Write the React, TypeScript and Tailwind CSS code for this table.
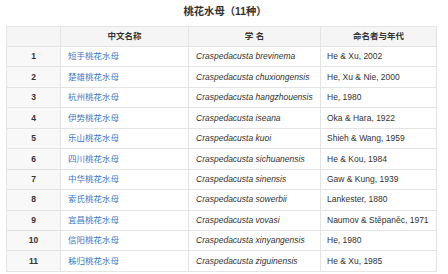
const species = [
  { cn: "短手桃花水母", sp: "brevinema", author: "He & Xu, 2002" },
  { cn: "楚雄桃花水母", sp: "chuxiongensis", author: "He, Xu & Nie, 2000" },
  { cn: "杭州桃花水母", sp: "hangzhouensis", author: "He, 1980" },
  { cn: "伊势桃花水母", sp: "iseana", author: "Oka & Hara, 1922" },
  { cn: "乐山桃花水母", sp: "kuoi", author: "Shieh & Wang, 1959" },
  { cn: "四川桃花水母", sp: "sichuanensis", author: "He & Kou, 1984" },
  { cn: "中华桃花水母", sp: "sinensis", author: "Gaw & Kung, 1939" },
  { cn: "索氏桃花水母", sp: "sowerbii", author: "Lankester, 1880" },
  { cn: "宜昌桃花水母", sp: "vovasi", author: "Naumov & Stěpaněc, 1971" },
  { cn: "信阳桃花水母", sp: "xinyangensis", author: "He, 1980" },
  { cn: "秭归桃花水母", sp: "ziguinensis", author: "He & Xu, 1985" },
];

export default function App() {
  return (
    <div
      className="w-[448px] h-[274px] bg-white text-[#333] overflow-hidden"
      style={{ fontFamily: '"Liberation Sans", "Noto Sans CJK SC", sans-serif' }}
    >
      <div className="h-[26px] flex items-center justify-center pl-[2px] pb-[2px] text-[10.3px] font-bold">
        桃花水母（11种）
      </div>
      <div className="pl-[6px]">
        <table className="w-[430px] border-collapse table-fixed text-[8.5px] border border-[#e4e4e4]">
          <colgroup>
            <col className="w-[54px]" />
            <col className="w-[128px]" />
            <col className="w-[132px]" />
            <col className="w-[116px]" />
          </colgroup>
          <thead>
            <tr className="h-[20px] bg-[#f5f5f5] font-bold">
              <th className="border border-[#e4e4e4]"></th>
              <th className="border border-[#e4e4e4] text-center">中文名称</th>
              <th className="border border-[#e4e4e4] text-center">学 名</th>
              <th className="border border-[#e4e4e4] text-center">命名者与年代</th>
            </tr>
          </thead>
          <tbody>
            {species.map((s, i) => (
              <tr key={s.sp} className="h-[20.45px]">
                <td className="border border-[#e4e4e4] bg-[#f8f8f8] text-center font-bold">{i + 1}</td>
                <td className="border border-[#e4e4e4] pl-[7px] text-[#3a78c6]">{s.cn}</td>
                <td className="border border-[#e4e4e4] pl-[7px] italic">Craspedacusta {s.sp}</td>
                <td className="border border-[#e4e4e4] pl-[6px]">{s.author}</td>
              </tr>
            ))}
          </tbody>
        </table>
      </div>
    </div>
  );
}
